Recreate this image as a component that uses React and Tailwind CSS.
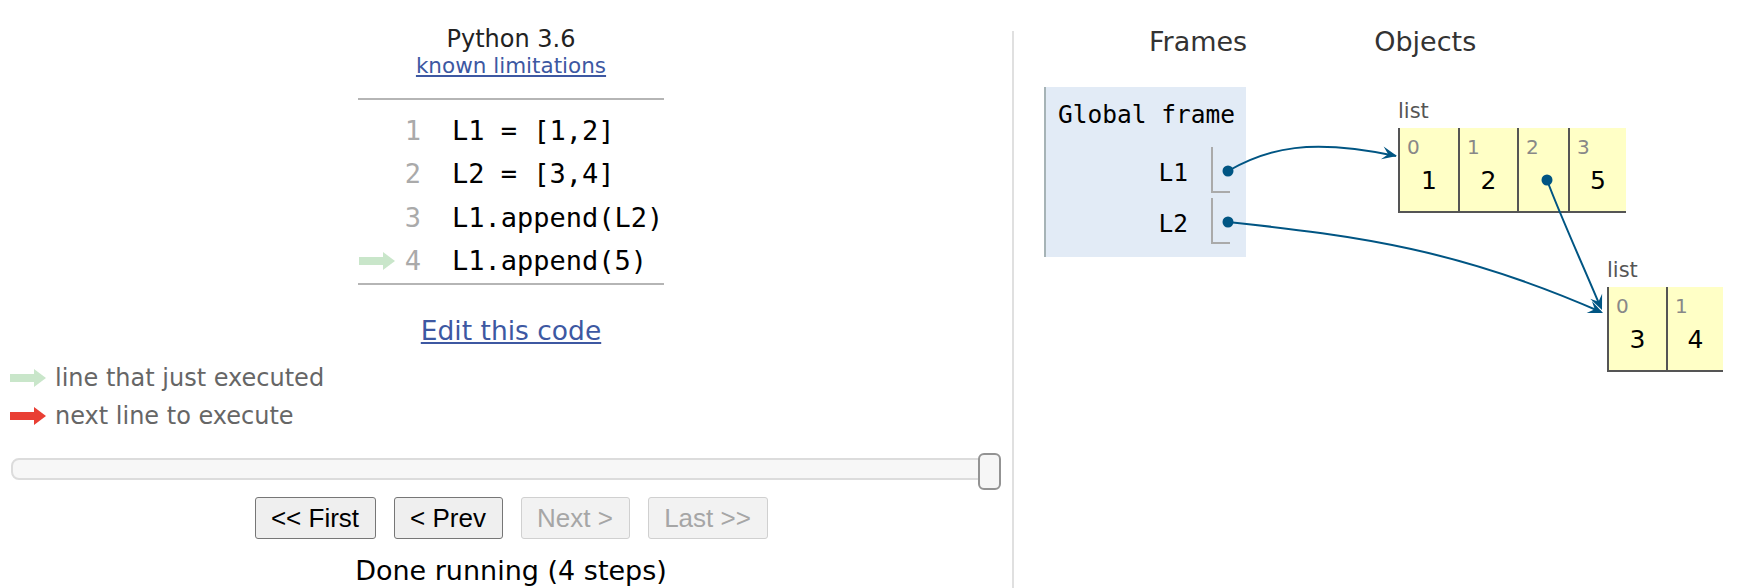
import React from 'react';

const sans = "font-['DejaVu_Sans',Verdana,sans-serif]";
const mono = "font-['DejaVu_Sans_Mono',monospace]";

const codeLines = ['L1 = [1,2]', 'L2 = [3,4]', 'L1.append(L2)', 'L1.append(5)'];

function LegendArrow({ color }) {
  return (
    <svg width="36" height="18" viewBox="0 0 36 18">
      <rect x="0" y="5" width="25" height="8" fill={color} />
      <polygon points="24,0 36,9 24,18" fill={color} />
    </svg>
  );
}

function Cell({ index, value, width, pointer }) {
  return (
    <div className={`flex flex-col border-l-2 border-[#555] bg-[#ffffc6] ${width}`}>
      <div className={`${sans} pl-[7px] pt-[8px] text-[20px] leading-[22px] text-[#888]`}>{index}</div>
      <div className={`${sans} mt-[9px] text-center text-[25px] leading-[28px] text-black`}>
        {pointer ? '\u00a0' : value}
      </div>
    </div>
  );
}

function head(tip, from, len = 15, wid = 13) {
  const dx = tip[0] - from[0];
  const dy = tip[1] - from[1];
  const d = Math.hypot(dx, dy);
  const ux = dx / d;
  const uy = dy / d;
  const nx = -uy;
  const ny = ux;
  const bx = tip[0] - ux * len;
  const by = tip[1] - uy * len;
  const notchX = tip[0] - ux * len * 0.6;
  const notchY = tip[1] - uy * len * 0.6;
  return [
    [tip[0], tip[1]],
    [bx + (nx * wid) / 2, by + (ny * wid) / 2],
    [notchX, notchY],
    [bx - (nx * wid) / 2, by - (ny * wid) / 2],
  ]
    .map((p) => p.join(','))
    .join(' ');
}

function Arrows() {
  const c = '#005583';
  return (
    <svg className="pointer-events-none absolute left-0 top-0" width="1741" height="588">
      <path d="M1228 171 C1268 148, 1310 138, 1396 156" stroke={c} strokeWidth="2" fill="none" />
      <polygon points={head([1397, 156], [1310, 138])} fill={c} />
      <path d="M1228 222 C1360 236, 1460 250, 1601 312" stroke={c} strokeWidth="2" fill="none" />
      <polygon points={head([1603, 313], [1460, 250])} fill={c} />
      <path d="M1547 180 C1560 215, 1585 270, 1600 306" stroke={c} strokeWidth="2" fill="none" />
      <polygon points={head([1602, 310], [1585, 270])} fill={c} />
      <circle cx="1228" cy="171" r="5.5" fill={c} />
      <circle cx="1228" cy="222" r="5.5" fill={c} />
      <circle cx="1547" cy="180" r="5.5" fill={c} />
    </svg>
  );
}

export default function App() {
  return (
    <div className="relative flex h-[588px] w-[1741px] overflow-hidden bg-white">
      {/* left: code + controls */}
      <div className="flex w-[1012px] shrink-0 flex-col pl-[10px]">
        <div className={`${sans} pt-[25px] text-center`}>
          <div className="text-[24px] leading-[28px] text-[#222]">Python 3.6</div>
          <a className="inline-block text-[21.5px] leading-[25px] text-[#3d58a2] underline">
            known limitations
          </a>
        </div>

        <div className="mx-auto mt-[18px] w-[306px] border-y-2 border-[#b5b5b5] pt-[9px]">
          {codeLines.map((line, i) => (
            <div key={i} className={`${mono} flex h-[43.5px] items-center text-[27px]`}>
              <div className="flex w-[37px] shrink-0 items-center pl-[1px]">
                {i === 3 && <LegendArrow color="#c9e6ca" />}
              </div>
              <div className="w-[26px] shrink-0 text-right text-[#aaa]">{i + 1}</div>
              <div className="ml-[31px] whitespace-pre text-black">{line}</div>
            </div>
          ))}
        </div>

        <div className={`${sans} mt-[30px] text-center text-[26.5px] leading-[31px]`}>
          <a className="text-[#3d58a2] underline">Edit this code</a>
        </div>

        <div className={`${sans} mt-[13px] text-[24px] leading-[38px] text-[#666]`}>
          <div className="flex items-center gap-[9px]">
            <LegendArrow color="#c9e6ca" />
            <span>line that just executed</span>
          </div>
          <div className="flex items-center gap-[9px]">
            <LegendArrow color="#e93f34" />
            <span>next line to execute</span>
          </div>
        </div>

        <div className="relative ml-[1px] mt-[23px] h-[22px] w-[990px] rounded-[8px] border-2 border-[#dcdcdc] bg-[#f7f7f7]">
          <div className="absolute right-[-2px] top-[-7px] h-[37px] w-[23px] rounded-[6px] border-2 border-[#939393] bg-[#f6f6f6]" />
        </div>

        <div className="mt-[17px] flex justify-center gap-[18px] font-['Liberation_Sans',Arial,sans-serif] text-[26px]">
          <button className="h-[42px] w-[121px] rounded-[3px] border border-[#767676] bg-[#efefef] text-black">
            &lt;&lt; First
          </button>
          <button className="h-[42px] w-[109px] rounded-[3px] border border-[#767676] bg-[#efefef] text-black">
            &lt; Prev
          </button>
          <button className="h-[42px] w-[109px] rounded-[3px] border border-[#d0d0d0] bg-[#f2f2f2] text-[#a6a6a6]">
            Next &gt;
          </button>
          <button className="h-[42px] w-[120px] rounded-[3px] border border-[#d0d0d0] bg-[#f2f2f2] text-[#a6a6a6]">
            Last &gt;&gt;
          </button>
        </div>

        <div className={`${sans} mt-[16px] text-center text-[27px] leading-[31px] text-black`}>
          Done running (4 steps)
        </div>
      </div>

      {/* divider */}
      <div className="mt-[31px] w-[2px] shrink-0 bg-[#e0e0e0]" />

      {/* right: frames + objects */}
      <div className="flex flex-1 flex-col">
        <div className={`${sans} flex pt-[26px] text-[27px] leading-[31px] text-[#333]`}>
          <div className="ml-[135px]">Frames</div>
          <div className="ml-[127px]">Objects</div>
        </div>

        <div className="mt-[30px] flex items-start">
          <div className="ml-[30px] h-[170px] w-[202px] border-l-2 border-[#a6b3b6] bg-[#e2ebf6] pt-[14px]">
            <div className={`${mono} pl-[12px] text-[24.5px] leading-[28px] text-black`}>Global frame</div>
            <div className="mt-[18px] flex flex-col gap-[5px]">
              {['L1', 'L2'].map((name) => (
                <div key={name} className="flex h-[46px] items-center">
                  <div className={`${mono} w-[142px] pt-[6px] text-right text-[24.5px] leading-[28px] text-black`}>
                    {name}
                  </div>
                  <div className="ml-[23px] h-[46px] w-[19px] border-b-2 border-l-2 border-[#aaa]" />
                </div>
              ))}
            </div>
          </div>

          <div className="ml-[152px] mt-[14px] flex flex-col items-start">
            <div className={`${sans} text-[21px] leading-[21px] text-[#555]`}>list</div>
            <div className="mt-[6px] flex h-[85px] border-b-2 border-[#555]">
              <Cell index="0" value="1" width="w-[60px]" />
              <Cell index="1" value="2" width="w-[59px]" />
              <Cell index="2" pointer width="w-[51px]" />
              <Cell index="3" value="5" width="w-[58px]" />
            </div>

            <div className="ml-[209px] mt-[47px] flex flex-col items-start">
              <div className={`${sans} text-[21px] leading-[21px] text-[#555]`}>list</div>
              <div className="mt-[6px] flex h-[85px] border-b-2 border-[#555]">
                <Cell index="0" value="3" width="w-[59px]" />
                <Cell index="1" value="4" width="w-[57px]" />
              </div>
            </div>
          </div>
        </div>
      </div>

      <Arrows />
    </div>
  );
}
